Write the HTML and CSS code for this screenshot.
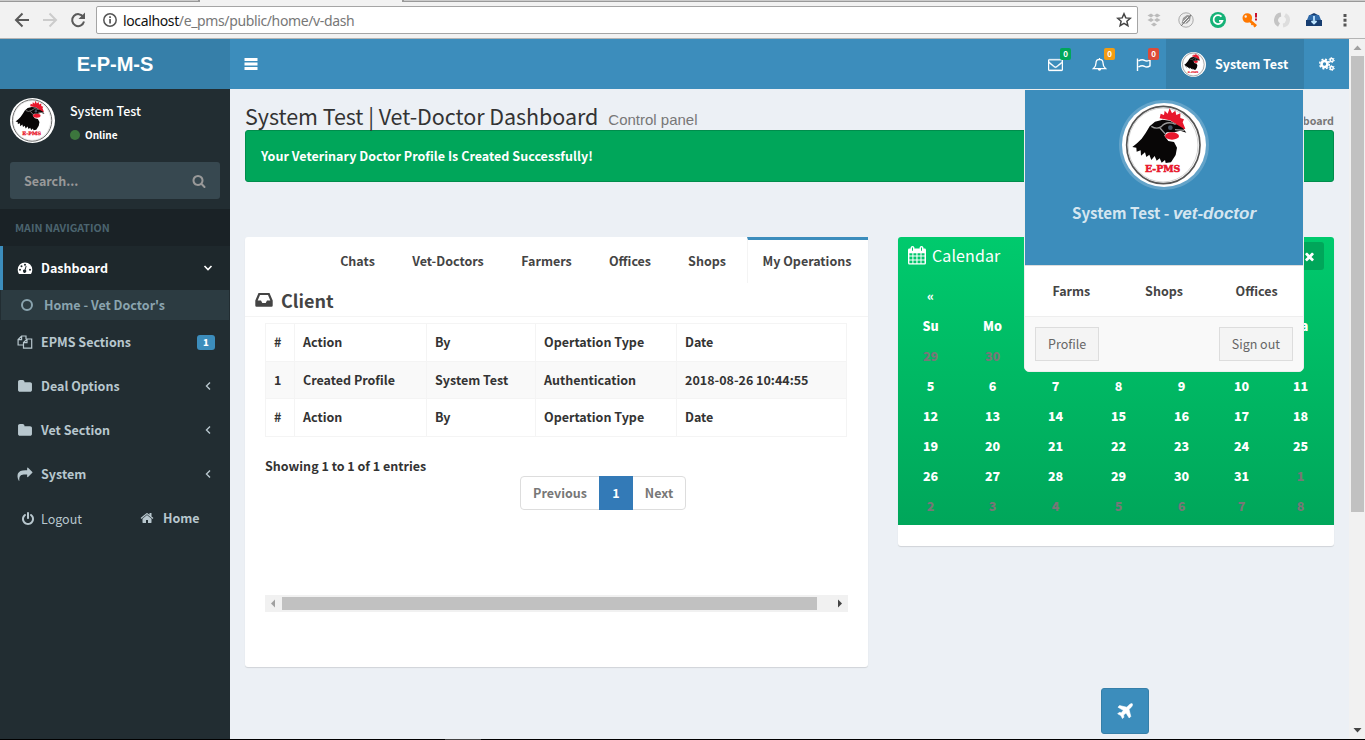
FILE: index.html
```html
<!DOCTYPE html>
<html lang="en">
<head>
<meta charset="utf-8">
<title>E-P-M-S | Dashboard</title>
<link rel="stylesheet" href="styles.css">
</head>
<body>
<svg class="defs" width="0" height="0">
  <symbol id="logo" viewBox="21 24 252 252">
    <circle cx="147" cy="150" r="126" fill="#fff"/>
    <ellipse cx="145" cy="150" rx="110" ry="116" fill="none" stroke="#555" stroke-width="5"/>
    <ellipse cx="144" cy="150" rx="105" ry="111" fill="none" stroke="#bbb" stroke-width="2"/>
    <path fill="#e8172c" d="M134 70L137 56 147 60 149 47 158 56 164 40 171 55 181 47 184 60 196 55 196 69 207 73 203 82 211 101 194 106 184 88 165 76Z"/>
    <path fill="#080606" d="M52 156L66 145 80 131 92 114 104 94 120 80 143 74 165 77 184 88 204 100 214 113 196 107 178 112 155 112 148 122 160 138 177 141 186 158 182 180 168 202 152 204 150 195 140 203 134 190 125 197 119 183 109 195 103 179 94 186 90 172 78 182 77 166 65 170 64 158Z"/>
    <path fill="none" stroke="#999" stroke-width="4" d="M109 94Q125 104 139 95Q155 76 182 88M152 118L135 99M180 104L208 106"/>
    <circle cx="166" cy="98" r="7" fill="#456"/>
    <ellipse cx="171" cy="123" rx="21" ry="11" fill="#e8172c"/>
    <text x="143" y="231" text-anchor="middle" textLength="106" lengthAdjust="spacingAndGlyphs" class="logo-text">E-PMS</text>
  </symbol>
  <symbol id="search" viewBox="0 0 1792 1792"><path d="M1216 832q0-185-131.5-316.5t-316.5-131.5-316.5 131.5-131.5 316.5 131.5 316.5 316.5 131.5 316.5-131.5 131.5-316.5zm512 832q0 52-38 90t-90 38q-54 0-90-38l-343-342q-179 124-399 124-143 0-273.5-55.5t-225-150-150-225-55.5-273.5 55.5-273.5 150-225 225-150 273.5-55.5 273.5 55.5 225 150 150 225 55.5 273.5q0 220-124 399l343 343q37 37 37 90z"/></symbol>
  <symbol id="folder" viewBox="0 0 1792 1792"><path d="M1728 608v704q0 92-66 158t-158 66h-1216q-92 0-158-66t-66-158v-960q0-92 66-158t158-66h320q92 0 158 66t66 158v32h672q92 0 158 66t66 158z"/></symbol>
  <symbol id="left" viewBox="0 0 14 14"><path fill="none" stroke="currentColor" stroke-width="1.4" d="M9 3.5L5.5 7 9 10.500"/></symbol>
</svg>

<div class="chrome">
  <div class="tabstrip"><i></i><i class="on"></i><i></i></div>
  <div class="toolbar">
    <svg class="nav" viewBox="0 0 90 30" width="90" height="30"><g fill="none" stroke-width="2"><path stroke="#5a5a5a" d="M29 15H16M22.500 8.500L16 15 22.500 21.500"/><path stroke="#ccc" d="M43 15H56M49.500 8.500L56 15 49.500 21.500"/><path stroke="#5a5a5a" d="M83.300 12A6 6 0 1 0 84 16.500"/></g><path fill="#5a5a5a" d="M85 7.500v6.500h-6.500z"/></svg>
    <div class="urlbar">
      <svg viewBox="0 0 16 16" width="16" height="16"><circle cx="8" cy="8" r="6.200" fill="none" stroke="#555" stroke-width="1.500"/><path fill="#555" d="M7.200 7h1.700v4.500H7.200zM7.200 4.300h1.700V6H7.200z"/></svg>
      <span class="url"><b>localhost</b>/e_pms/public/home/v-dash</span>
      <svg viewBox="0 0 16 16" width="16" height="16"><path fill="none" stroke="#444" stroke-width="1.500" d="M8 1.800l1.800 4.100 4.500.4-3.400 3 1 4.400L8 11.400l-3.900 2.300 1-4.400-3.400-3 4.500-.4z"/></svg>
    </div>
    <div class="exts">
      <svg viewBox="0 0 16 16"><path fill="#bbb" d="M5 1.500l3 2-3 2-3.500-2zM11 1.500l3.500 2-3.500 2-3-2zM5 6l3 2-3 2-3.500-2zM11 6l3.500 2-3.500 2-3-2zM8 10.500l3 2-3 2-3-2z"/></svg>
      <svg viewBox="0 0 16 16"><circle cx="8" cy="8" r="7.200" fill="#eee" stroke="#aaa"/><path fill="#999" d="M3.500 11.500L5 6l4-3 4 .500-1 5-3 3z"/><path stroke="#eee" d="M5 10l5-5M7 11l4-4"/><path stroke="#777" d="M3 14L13 3"/></svg>
      <svg viewBox="0 0 16 16"><circle cx="8" cy="8" r="8" fill="#15b277"/><path fill="none" stroke="#fff" stroke-width="1.800" d="M11.500 4.600A4.500 4.500 0 1 0 12.400 8.800H9"/></svg>
      <svg viewBox="0 0 16 16"><path fill="#ff7800" fill-rule="evenodd" d="M.5 6a4.800 4.800 0 1 1 9.600 0 4.800 4.800 0 0 1-9.600 0zM2.500 4.500a1.200 1.200 0 1 0 2.400 0 1.200 1.200 0 0 0-2.400 0z"/><path stroke="#ff7800" stroke-width="2.800" d="M7 8l7 6"/><path stroke="#ff7800" stroke-width="1.600" d="M9.500 13l2-2.500M12 15l2-2"/><path stroke="#c8102e" stroke-width="2" d="M14 1v4.500M14 6.500v2"/></svg>
      <svg viewBox="0 0 16 16"><path fill="none" stroke="#c4c4c4" stroke-width="4" d="M7 2.500A5.600 5.600 0 0 0 5 13"/><path fill="none" stroke="#ddd" stroke-width="4" d="M9 13.500A5.600 5.600 0 0 0 11 3"/></svg>
      <svg viewBox="0 0 16 16"><path fill="#173d70" d="M0 8h16v6H0z"/><path fill="#2f69a8" d="M1 8l2-5h10l2 5z"/><path fill="#173d70" d="M4 3l4-2 4 2z"/><path stroke="#bfe6ff" stroke-width="1.800" d="M8 4v7M5.500 9L8 11.500 10.500 9" fill="none"/></svg>
      <svg viewBox="0 0 16 16" class="dots"><path fill="#555" d="M6.500 2h3v3h-3zM6.500 6.700h3v3h-3zM6.500 11.400h3v3h-3z"/></svg>
    </div>
  </div>
</div>

<div class="view">
  <div class="app">
    <header class="topbar">
      <div class="brand">E-P-M-S</div>
      <svg class="burger" viewBox="0 0 14 12" width="14" height="12"><path fill="#fff" d="M.5 0h13v3H.5zM.5 4.500h13v3H.5zM.5 9h13v3H.5z"/></svg>
      <div class="tools">
        <a class="tool"><svg viewBox="0 0 1792 1792" width="15" height="15"><path d="M1664 1504v-768q-32 36-69 66-268 206-426 338-51 43-83 67t-86.500 48.500-102.500 24.500h-2q-48 0-102.500-24.500t-86.500-48.500-83-67q-158-132-426-338-37-30-69-66v768q0 13 9.500 22.500t22.500 9.500h1472q13 0 22.500-9.500t9.500-22.500zm0-1051v-24.500l-.5-13-3-12.500-5.500-9-9-7.500-14-2.500h-1472q-13 0-22.500 9.500t-9.500 22.500q0 168 147 284 193 152 401 317 6 5 35 29.500t46 37.500 44.500 31.500 50.500 27.500 43 9h2q20 0 43-9t50.500-27.500 44.500-31.500 46-37.500 35-29.500q208-165 401-317 54-43 100.500-115.500t46.500-131.500zm128-37v1088q0 66-47 113t-113 47h-1472q-66 0-113-47t-47-113v-1088q0-66 47-113t113-47h1472q66 0 113 47t47 113z" stroke="#fff" stroke-width="40"/></svg><em class="green">0</em></a>
        <a class="tool"><svg viewBox="0 0 15 15" width="15" height="15"><path fill="none" stroke="#fff" stroke-width="1.300" d="M1.500 11.600Q4 9.500 4 6Q4 2.500 7.500 2.400Q11 2.500 11 6Q11 9.500 13.500 11.600ZM7.500 1v1.500"/><path d="M5.800 12h3.400a1.700 1.800 0 0 1-3.400 0z"/></svg><em class="orange">0</em></a>
        <a class="tool"><svg viewBox="0 0 15 15" width="15" height="15"><path fill="none" stroke="#fff" stroke-width="1.400" d="M1.500 1.500V14M2.500 4Q6 1.800 8.500 3.300T14 3v5.800Q11 10.800 8.500 9.300T2.500 10"/></svg><em class="red">0</em></a>
        <a class="user"><svg width="25" height="25"><use href="#logo"/></svg><span>System Test</span></a>
        <a class="gears"><svg viewBox="0 0 16 14" width="16" height="14"><g fill="none" stroke="#fff"><circle cx="5.500" cy="7" r="3" stroke-width="2.600"/><circle cx="5.500" cy="7" r="4.800" stroke-width="1.500" stroke-dasharray="2 1.770"/><circle cx="12.700" cy="3" r="1.600" stroke-width="1.500"/><circle cx="12.700" cy="3" r="2.600" stroke-width="1" stroke-dasharray="1.300 1.420"/><circle cx="12.700" cy="11" r="1.600" stroke-width="1.500"/><circle cx="12.700" cy="11" r="2.600" stroke-width="1" stroke-dasharray="1.300 1.420"/></g></svg></a>
      </div>
    </header>

    <div class="main">
      <aside class="sidebar">
        <div class="panel"><svg width="45" height="45"><use href="#logo"/></svg><div><p class="pname">System Test</p><p class="online"><i></i>Online</p></div></div>
        <div class="search"><span>Search...</span><svg width="14" height="14"><use href="#search"/></svg></div>
        <div class="navhead">MAIN NAVIGATION</div>
        <a class="item active"><svg viewBox="0 0 16 14" width="16" height="14"><path fill-rule="evenodd" d="M.7 8.700a7.300 7.300 0 0 1 14.600 0Q15.300 11 14 13H2Q.7 11 .7 8.700zM2 8.800a1 1 0 1 0 2 0 1 1 0 0 0-2 0zM3.500 5.300a1 1 0 1 0 2 0 1 1 0 0 0-2 0zM7 3.700a1 1 0 1 0 2 0 1 1 0 0 0-2 0zM12 8.800a1 1 0 1 0 2 0 1 1 0 0 0-2 0zM9.600 5l-1 3.800a1.600 1.600 0 1 1-1-.3l1.200-3.700z"/></svg><span>Dashboard</span><svg class="end" viewBox="0 0 14 14" width="14" height="14"><path fill="none" stroke="#fff" stroke-width="1.600" d="M3.500 5L7 8.500 10.500 5"/></svg></a>
        <a class="sub"><i></i><span>Home - Vet Doctor's</span></a>
        <a class="item"><svg viewBox="0 0 16 14" width="16" height="14"><path fill="none" stroke="currentColor" stroke-width="1.200" d="M6.500 10H1.100V4.500L4.600 1H9v3M1.100 4.700h3.500V1M6.500 13V7.500L10 4h4.700v9.200H6.500zM6.500 7.700H10V4"/></svg><span>EPMS Sections</span><b class="count">1</b></a>
        <a class="item"><svg width="15" height="15"><use href="#folder"/></svg><span>Deal Options</span><svg class="end" width="14" height="14"><use href="#left"/></svg></a>
        <a class="item"><svg width="15" height="15"><use href="#folder"/></svg><span>Vet Section</span><svg class="end" width="14" height="14"><use href="#left"/></svg></a>
        <a class="item"><svg viewBox="0 0 1792 1792" width="15" height="15"><path d="M1792 640q0 26-19 45l-512 512q-19 19-45 19t-45-19-19-45v-256h-224q-98 0-175.500 6t-154 21.500-133 42.500-105.500 69.500-80 101-48.500 138.500-17.500 181q0 55 5 123 0 6 2.500 23.500t2.500 26.500q0 15-8.500 25t-23.500 10q-16 0-28-17-7-9-13-22t-13.500-30-10.500-24q-127-285-127-451 0-199 53-333 162-403 875-403h224v-256q0-26 19-45t45-19 45 19l512 512q19 19 19 45z"/></svg><span>System</span><svg class="end" width="14" height="14"><use href="#left"/></svg></a>
        <div class="bottom">
          <a class="logout"><svg viewBox="0 0 1792 1792" width="14" height="14"><path d="M1664 896q0 156-61 298t-164 245-245 164-298 61-298-61-245-164-164-245-61-298q0-182 80.500-343t226.500-270q43-32 95.500-25t83.500 50q32 42 24.500 94.500t-49.500 84.500q-98 74-151.500 181t-53.500 228q0 104 40.500 198.500t109.500 163.500 163.500 109.500 198.500 40.500 198.500-40.500 163.500-109.500 109.500-163.500 40.500-198.500q0-121-53.500-228t-151.500-181q-42-32-49.500-84.500t24.500-94.500q31-43 84-50t95 25q146 109 226.500 270t80.500 343zm-640-768v640q0 52-38 90t-90 38-90-38-38-90v-640q0-52 38-90t90-38 90 38 38 90z"/></svg><span>Logout</span></a>
          <a class="home"><svg viewBox="0 0 1792 1792" width="14" height="14"><path d="M1472 992v480q0 26-19 45t-45 19h-384v-384h-256v384h-384q-26 0-45-19t-19-45v-480q0-1 .5-3t.5-3l575-474 575 474q1 2 1 6zm223-69l-62 74q-8 9-21 11h-3q-13 0-21-7l-692-577-692 577q-12 8-24 7-13-2-21-11l-62-74q-8-10-7-23.500t11-21.500l719-599q32-26 76-26t76 26l244 204v-195q0-14 9-23t23-9h192q14 0 23 9t9 23v408l219 182q10 8 11 21.500t-7 23.500z"/></svg><span>Home</span></a>
        </div>
      </aside>

      <section class="content">
        <div class="heading"><h1>System Test | Vet-Doctor Dashboard</h1><small>Control panel</small><span class="crumb">Dashboard</span></div>
        <div class="alert">Your Veterinary Doctor Profile Is Created Successfully!</div>
        <div class="cols">
          <div class="card ops">
            <nav class="tabs"><a>Chats</a><a>Vet-Doctors</a><a>Farmers</a><a>Offices</a><a>Shops</a><a class="on">My Operations</a></nav>
            <h2><svg viewBox="0 0 18 16" width="18" height="16"><path fill-rule="evenodd" d="M3.500 1h11L17.700 8.500V13.500Q17.700 14.800 16.500 14.800H1.500Q.3 14.800.3 13.500V8.500zM5 3L2.700 8.500H6l1.300 2.600h3.400L12 8.500h3.300L13 3z"/></svg>Client</h2>
            <div class="tablewrap">
              <table>
                <tr><th class="c1">#</th><th class="c2">Action</th><th class="c3">By</th><th class="c4">Opertation Type</th><th>Date</th></tr>
                <tr class="odd"><td>1</td><td>Created Profile</td><td>System Test</td><td>Authentication</td><td>2018-08-26 10:44:55</td></tr>
                <tr><th>#</th><th>Action</th><th>By</th><th>Opertation Type</th><th>Date</th></tr>
              </table>
              <p class="info">Showing 1 to 1 of 1 entries</p>
              <div class="pager"><a>Previous</a><a class="cur">1</a><a>Next</a></div>
              <div class="hscroll"><svg viewBox="0 0 17 17" width="17" height="17"><path fill="#a0a0a0" d="M10 4.500v8L6 8.500z"/></svg><i></i><svg viewBox="0 0 17 17" width="17" height="17"><path fill="#444" d="M7 4.500v8l4-4z"/></svg></div>
            </div>
          </div>
          <div class="card cal">
            <div class="green-box">
              <div class="calhead"><svg viewBox="0 0 18 19" width="18" height="19"><path fill-rule="evenodd" d="M0 4Q0 2.600 1.400 2.600H2.600V1.500Q2.600 0 4.500 0T6.400 1.500V2.600H11.600V1.500Q11.600 0 13.500 0T15.400 1.500V2.600H16.600Q18 2.600 18 4V17Q18 18.600 16.600 18.600H1.400Q0 18.600 0 17zM1.400 7.200v2.300h3V7.200zM5.400 7.200v2.300h3V7.200zM9.500 7.200v2.300h3V7.200zM13.500 7.200v2.300h3V7.200zM1.400 10.500v3h3v-3zM5.400 10.500v3h3v-3zM9.500 10.500v3h3v-3zM13.500 10.500v3h3v-3zM1.400 14.500v2.700h3v-2.700zM5.400 14.500v2.700h3v-2.700zM9.500 14.500v2.700h3v-2.700zM13.500 14.500v2.700h3v-2.700zM4 1.500v3.200h1V1.500zM13 1.500v3.200h1V1.500z"/></svg><span>Calendar</span><b class="close"><svg viewBox="0 0 1792 1792" width="13" height="13"><path d="M1490 1322q0 40-28 68l-136 136q-28 28-68 28t-68-28l-294-294-294 294q-28 28-68 28t-68-28l-136-136q-28-28-28-68t28-68l294-294-294-294q-28-28-28-68t28-68l136-136q28-28 68-28t68 28l294 294 294-294q28-28 68-28t68 28l136 136q28 28 28 68t-28 68l-294 294 294 294q28 28 28 68z"/></svg></b></div>
              <div class="days">
                <b>«</b><b></b><b></b><b></b><b></b><b></b><b></b>
                <b>Su</b><b>Mo</b><b></b><b></b><b></b><b></b><b>Sa</b>
                <b class="old">29</b><b class="old">30</b><b></b><b></b><b></b><b></b><b></b>
                <b>5</b><b>6</b><b>7</b><b>8</b><b>9</b><b>10</b><b>11</b>
                <b>12</b><b>13</b><b>14</b><b>15</b><b>16</b><b>17</b><b>18</b>
                <b>19</b><b>20</b><b>21</b><b>22</b><b>23</b><b>24</b><b>25</b>
                <b>26</b><b>27</b><b>28</b><b>29</b><b>30</b><b>31</b><b class="old">1</b>
                <b class="old">2</b><b class="old">3</b><b class="old">4</b><b class="old">5</b><b class="old">6</b><b class="old">7</b><b class="old">8</b>
              </div>
            </div>
          </div>
        </div>
        <a class="plane"><svg viewBox="0 0 16 16" width="16" height="16"><path d="M15.300.8Q16 1.500 15 3.200Q14.200 4.500 12 6.300L13.800 13.400 12.200 15 9 9.900 6.600 12 6.900 14.200 5.500 15.600 3.800 12.500.7 10.800 2.100 9.400 4.400 9.700 6.300 7.300 1 4.200 2.500 2.600 9.800 4.200Q11.700 2 13 1.200Q14.600.2 15.300.8z" stroke="#fff" stroke-width=".6"/></svg></a>
      </section>
    </div>

    <div class="menu">
      <div class="menu-top"><svg width="90" height="90"><circle cx="45" cy="45" r="45" fill="#fff" fill-opacity=".2"/><use href="#logo" x="3" y="3" width="84" height="84"/></svg><p>System Test - <i>vet-doctor</i></p></div>
      <div class="menu-links"><a>Farms</a><a>Shops</a><a>Offices</a></div>
      <div class="menu-foot"><a>Profile</a><a>Sign out</a></div>
    </div>
  </div>
  <div class="vscroll"><svg viewBox="0 0 16 16" width="16" height="16"><path fill="#a0a0a0" d="M4.500 11h8L8.500 6.500z"/></svg><i></i><svg viewBox="0 0 16 16" width="16" height="16"><path fill="#444" d="M4.500 5h8L8.500 9.500z"/></svg></div>
</div>
<div class="taskbar"><i></i></div>
</body>
</html>
```
FILE: styles.css
```css
* { box-sizing: border-box; }
body { margin: 0; width: 1365px; height: 740px; overflow: hidden; display: flex; flex-direction: column; font-family: "Noto Sans CJK SC", "Open Sans", sans-serif; font-size: 12.5px; line-height: 20px; font-weight: 700; color: #333; background: #000; }
p, h1, h2 { margin: 0; }
svg { display: block; flex: none; fill: currentColor; }
.defs { position: absolute; }
.logo-text { font: 700 25px "DejaVu Serif", serif; fill: #e8172c; stroke: #e8172c; stroke-width: 1.5px; }

.chrome { height: 39px; background: #f2f2f2; border-bottom: 1px solid #b4b4b4; }
.tabstrip { height: 2px; display: flex; gap: 2px; background: #999; }
.tabstrip i { background: #ccc; height: 1px; width: 198px; }
.tabstrip .on { background: #f2f2f2; height: 2px; width: 202px; }
.tabstrip i:last-child { flex: 1; }
.toolbar { display: flex; height: 36px; align-items: center; }
.nav { margin-right: 6px; }
.urlbar { width: 1042px; height: 28px; background: #fff; border: 1px solid #a5a5a5; border-radius: 2px; display: flex; align-items: center; padding: 0 5px; gap: 5px; }
.url { flex: 1; font: 400 14px "Noto Sans", sans-serif; letter-spacing: -.37px; color: #777; }
.url b { font-weight: 400; color: #111; }
.exts { display: flex; gap: 16px; margin-left: 8px; }
.exts svg { width: 16px; height: 16px; }
.exts .dots { margin-left: -1px; }

.view { display: flex; height: 700px; }
.app { width: 1349px; position: relative; background: #ecf0f5; }
.topbar { display: flex; height: 50px; background: #3c8dbc; color: #fff; align-items: center; }
.brand { width: 230px; height: 50px; background: #367fa9; text-align: center; font: 700 20px/50px "Liberation Sans", Arial, sans-serif; }
.burger { margin-left: 14px; }
.tools { margin-left: auto; display: flex; height: 50px; }
.tool { width: 44px; display: flex; align-items: center; justify-content: center; position: relative; padding-right: 2px; }
.tool em { position: absolute; top: 9px; right: 7px; width: 11px; height: 12px; border-radius: 2px; font: 700 8px/12px "Noto Sans CJK SC", sans-serif; text-align: center; }
.green { background: #00a65a; } .orange { background: #f39c12; } .red { background: #dd4b39; }
.user { width: 138px; background: #367fa9; display: flex; align-items: center; gap: 9px; padding-left: 15px; }
.gears { width: 45px; display: flex; align-items: center; justify-content: center; }

.main { display: flex; height: 650px; }
.sidebar { width: 230px; background: #222d32; color: #b8c7ce; }
.panel { display: flex; height: 65px; padding: 9px 10px; gap: 15px; color: #fff; }
.pname { margin-top: 3px; line-height: 20px; font-weight: 500; }
.online { display: flex; align-items: center; gap: 5px; font-size: 10px; line-height: 14px; margin-top: 7px; }
.online i { width: 10px; height: 10px; border-radius: 50%; background: #3c763d; }
.search { height: 37px; margin: 8px 10px 10px; background: #374850; border-radius: 3px; display: flex; align-items: center; justify-content: space-between; padding: 0 14px; color: #999; }
.navhead { height: 37px; line-height: 38px; padding-left: 15px; background: #1a2226; color: #4b646f; font-size: 10.7px; white-space: nowrap; }
.item { height: 44px; display: flex; align-items: center; padding: 0 15px 0 17px; }
.item span { width: 150px; }
.item > svg:first-child { width: 16px; margin-right: 8px; }
.item .end { margin-left: auto; }
.active { background: #1e282c; color: #fff; border-left: 3px solid #3c8dbc; padding-left: 14px; }
.sub { height: 30px; margin: 0 1px; background: #2c3b41; color: #8aa4af; display: flex; align-items: center; gap: 11px; padding-left: 20px; }
.sub i { width: 12px; height: 12px; border: 2px solid; border-radius: 50%; }
.count { margin-left: auto; width: 18px; height: 15px; background: #3c8dbc; color: #fff; border-radius: 3px; font-size: 9.500px; line-height: 14px; text-align: center; }
.bottom { display: flex; height: 44px; align-items: center; padding-left: 21px; }
.bottom a { display: flex; align-items: center; gap: 6px; }
.logout { width: 119px; font-weight: 400; padding-top: 2px; }
.bottom .home { gap: 9px; }

.content { width: 1119px; padding: 0 15px; }
.heading { height: 41px; display: flex; align-items: baseline; padding-top: 11px; white-space: nowrap; }
h1 { font-size: 21.500px; font-weight: 400; line-height: 32px; letter-spacing: -.05px; }
small { font: 400 15px "Liberation Sans", Arial, sans-serif; color: #777; margin-left: 10px; }
.crumb { margin-left: auto; font-size: 10.700px; color: #777; }
.alert { height: 52px; background: #00a65a; border: 1px solid #008d4c; border-radius: 3px; color: #fff; padding: 15px; letter-spacing: .03px; }
.cols { display: flex; gap: 30px; margin-top: 55px; align-items: flex-start; height: 451px; }
.card { background: #fff; border-radius: 3px; box-shadow: 0 1px 1px rgba(0,0,0,.12); }
.ops { width: 623px; height: 430px; }
.tabs { display: grid; grid-template-columns: 67px 104px 83px 74px 70px 121px; gap: 5px; justify-content: end; height: 46px; color: #444; text-align: center; line-height: 41px; }
.tabs a { border-top: 3px solid transparent; white-space: nowrap; }
.tabs .on { border-top-color: #3c8dbc; border-left: 1px solid #f4f4f4; padding-right: 2px; }
h2 { height: 34px; display: flex; align-items: center; gap: 8px; padding-left: 10px; font-size: 18px; line-height: 34px; color: #444; border-bottom: 1px solid #f4f4f4; }
.tablewrap { padding: 6px 20px 0; }
table { border-collapse: collapse; width: 582px; table-layout: fixed; }
th, td { height: 37.500px; padding: 0 8px; border: 1px solid #f4f4f4; text-align: left; font-weight: 700; white-space: nowrap; }
.c1 { width: 29px; } .c2 { width: 132px; } .c3 { width: 109px; } .c4 { width: 141px; }
.odd { background: #f9f9f9; }
.info { margin-top: 19px; }
.pager { display: flex; width: 166px; height: 34px; margin: 0 0 0 255px; border: 1px solid #ddd; border-radius: 4px; color: #777; line-height: 32px; text-align: center; }
.pager a { flex: 1; }
.pager a:first-child { flex: 0 0 78px; }
.pager .cur { flex: 0 0 34px; margin: -1px 0; line-height: 34px; background: #337ab7; color: #fff; }
.hscroll { margin-top: 85px; width: 583px; height: 17px; background: #f1f1f1; display: flex; align-items: center; }
.hscroll i { width: 535px; height: 13px; background: #c1c1c1; margin-right: auto; }
.cal { width: 436px; height: 309px; overflow: hidden; }
.green-box { height: 288px; background: linear-gradient(#00ca6d, #00a65a); color: #fff; }
.calhead { height: 44px; padding: 5px 10px; display: flex; align-items: flex-start; }
.calhead > svg { margin-top: 4px; }
.calhead span { margin-left: 6px; font-size: 16px; font-weight: 400; line-height: 26px; letter-spacing: .1px; }
.close { margin-left: auto; width: 30px; height: 28px; border-radius: 3px; background: #00a65a; display: flex; align-items: center; justify-content: center; }
.days { display: grid; grid-template-columns: 62px 62px 64px 62px 64px 56px 62px; grid-auto-rows: 30px; padding-left: 1px; text-align: center; line-height: 30px; }
.days b { padding-left: 1px; }
.old { color: #777; }
.plane { display: flex; align-items: center; justify-content: center; width: 48px; height: 46px; margin: 0 0 0 856px; background: #3c8dbc; border: 1px solid #367fa9; border-radius: 3px; color: #fff; }

.menu { position: absolute; left: 1024px; top: 50px; width: 280px; height: 283px; background: #fff; border: 1px solid #eee; border-radius: 0 0 5px 5px; }
.menu-top { height: 176px; background: #3c8dbc; border-bottom: 1px solid #ddd; display: flex; flex-direction: column; align-items: center; padding-top: 10px; }
.menu-top p { margin-top: 11px; font-size: 15.1px; color: rgba(255,255,255,.8); line-height: 22px; }
.menu-top i { font-family: "Liberation Sans", Arial, sans-serif; font-size: 17px; }
.menu-links { height: 50px; display: grid; grid-template-columns: 1fr 1fr 1fr; text-align: center; line-height: 49px; color: #444; }
.menu-foot { height: 55px; border-radius: 0 0 5px 5px; background: #f9f9f9; border-top: 1px solid #eee; padding: 10px; display: flex; justify-content: space-between; font-weight: 400; color: #666; }
.menu-foot a { height: 34px; line-height: 32px; padding: 0 12px; background: #f4f4f4; border: 1px solid #ddd; }
.vscroll { width: 16px; background: #f1f1f1; }
.vscroll i { display: block; margin: 1px 1px 211px 2px; height: 456px; background: #c1c1c1; }
.taskbar { height: 1px; background: #000; }
.taskbar i { display: block; height: 1px; width: 36px; margin-left: 445px; background: #444; }
```
